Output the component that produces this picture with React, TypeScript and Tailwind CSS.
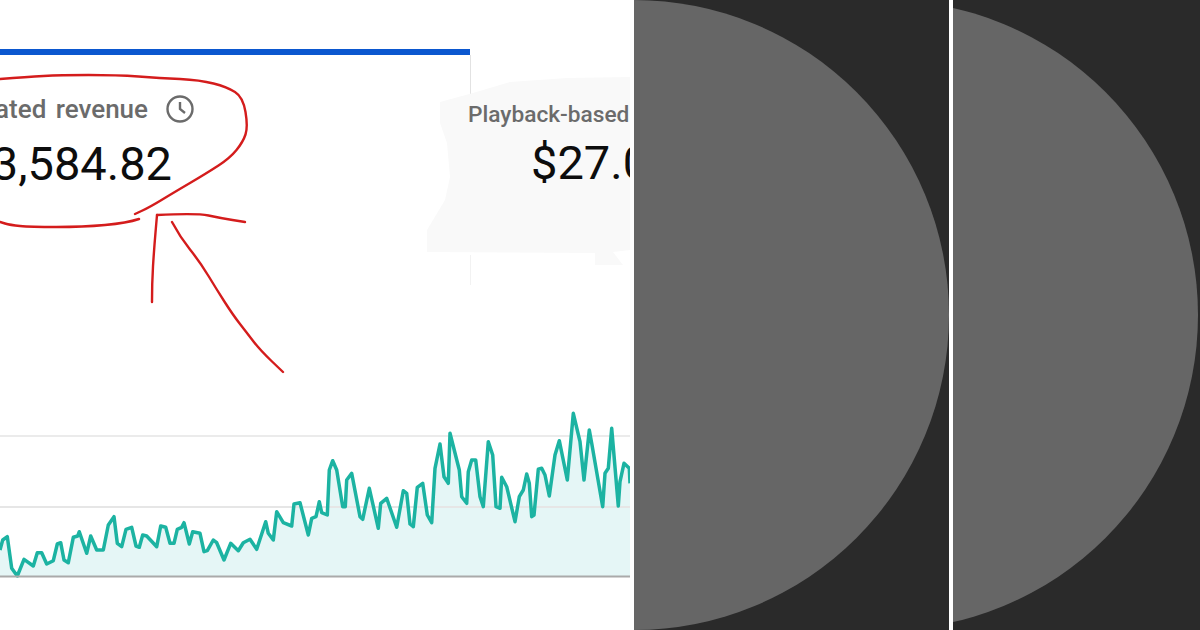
const zoomA = [[0,450],[8,420],[22,410],[35,505],[52,528],[72,478],[100,498],[112,458],[125,458],[140,492],[160,482],[172,432],[182,428],[192,480],[205,488],[220,412],[233,408],[238,395],[260,460],[272,408],[290,450],[310,450],[325,375],[342,350],[352,430],[365,440],[378,388],[395,382],[408,438],[418,442],[428,405],[440,408],[470,440],[482,378],[497,382],[510,430],[522,430],[532,388],[545,382],[552,368],[568,432],[578,395],[600,400],[612,455],[622,452],[640,420],[650,428],[672,480],[692,430],[715,452],[730,428],[750,418],[770,448],[797,365],[805,400],[820,420],[830,335],[850,368],[875,378],[882,312],[900,308],[925,405]];
const zoomB = [[5,355],[18,350],[28,305],[35,338],[52,345],[58,210],[68,182],[80,210],[98,320],[106,320],[110,240],[125,220],[150,350],[158,358],[178,265],[205,385],[212,310],[230,295],[260,382],[280,272],[290,280],[300,372],[310,380],[322,262],[338,250],[352,345],[365,368],[375,205],[390,132],[402,230],[415,250],[420,100],[448,210],[455,290],[470,310],[475,215],[485,180],[497,180],[510,290],[520,320],[535,125],[548,165],[558,320],[570,325],[575,232],[590,260],[615,365],[628,290],[640,270],[650,222],[658,250],[665,350],[672,345],[685,208],[695,205],[705,225],[718,288],[735,165],[748,122],[772,240],[790,40],[810,125],[822,240],[838,90],[845,130],[878,320],[885,220],[895,205],[905,85],[925,318],[930,245],[942,190],[958,205],[960,250]];

const line = [
  ...zoomA.map(([x, y]) => [x / 3, y / 3]),
  ...zoomB.map(([x, y]) => [x / 3 + 310, y / 3]),
].map(([x, y]) => `${x.toFixed(1)},${y.toFixed(1)}`).join(" ");

// hand-drawn strokes: run a quadratic through the midpoints so they stay round
const smooth = (pts: number[][]) => {
  let d = `M${pts[0][0]} ${pts[0][1]}`;
  for (let i = 1; i < pts.length - 1; i++) {
    const mx = (pts[i][0] + pts[i + 1][0]) / 2;
    const my = (pts[i][1] + pts[i + 1][1]) / 2;
    d += ` Q${pts[i][0]} ${pts[i][1]} ${mx} ${my}`;
  }
  const last = pts[pts.length - 1];
  return `${d} L${last[0]} ${last[1]}`;
};

const strokes = [
  [[0,79],[27,77],[60,75],[117,75],[160,78],[200,80],[227,87],[243,97],[248,127],[243,142],[230,158],[207,173],[173,193],[150,207],[135,214]],
  [[139,219],[127,223],[83,227],[30,227],[10,225],[0,222]],
  [[152,302],[152,283],[154,250],[157,215]],
  [[157,215],[197,213],[220,218],[245,222]],
  [[172,222],[180,237],[200,262],[217,290],[233,315],[247,333],[260,350],[283,372]],
];

function RevenueChart() {
  return (
    <svg viewBox="0 0 630 200" className="block h-[200px] w-[630px]">
      <line x1="0" y1="36" x2="630" y2="36" stroke="#ebebeb" strokeWidth="2" />
      <polygon points={`0,176 ${line} 630,176`} fill="#e5f6f6" />
      <line x1="0" y1="107" x2="630" y2="107" stroke="#e6e6e6" strokeWidth="2" />
      <polyline points={line} fill="none" stroke="#1cb3a2" strokeWidth="3.5" strokeLinejoin="round" />
      <line x1="0" y1="176.5" x2="630" y2="176.5" stroke="#aaaaaa" strokeWidth="2" />
    </svg>
  );
}

function Scribble() {
  return (
    <svg viewBox="0 0 630 630" className="absolute left-0 top-0 h-[630px] w-[630px]" fill="none" stroke="#d41c1c" strokeWidth="2.4" strokeLinecap="round" strokeLinejoin="round">
      {strokes.map((pts, i) => (
        <path key={i} d={smooth(pts)} />
      ))}
    </svg>
  );
}

export default function App() {
  return (
    <div className="flex h-[630px] w-[1200px] overflow-hidden bg-white font-['Roboto',sans-serif]">
      <div className="relative mr-1 h-[630px] w-[630px] shrink-0 overflow-hidden bg-white">
        <svg viewBox="0 0 630 630" className="absolute left-0 top-0 h-[630px] w-[630px]">
          <line x1="470.5" y1="55" x2="470.5" y2="96" stroke="#e2e2e2" />
          <line x1="470.5" y1="255" x2="470.5" y2="285" stroke="#f2f2f2" />
          <polygon points="440,102 473,93 510,82 567,78 630,77 630,250 613,252 623,265 595,265 595,253 427,252 427,230 445,200 450,177 447,143 440,123" fill="#f9f9f9" />
        </svg>
        <div className="relative mt-[49px] h-[6px] w-[470px] bg-[#0b57cf]" />
        <div className="relative flex h-[345px] pt-10">
          <div className="flex w-[172px] shrink-0 flex-col items-end">
            <div className="mr-[-22px] flex h-7 items-center gap-[18px] whitespace-nowrap text-[26px] font-medium text-[#6b6b6b] [word-spacing:3px]">
              <span>Estimated revenue</span>
              <svg viewBox="0 0 28 28" className="h-7 w-7 shrink-0" fill="none" stroke="#6b6b6b" strokeWidth="2.4">
                <circle cx="14" cy="14" r="12.5" />
                <path d="M14 7 V14 L19 18" />
              </svg>
            </div>
            <div className="mt-[13px] whitespace-nowrap text-[47px] leading-[56px] text-[#0d0d0d]">$3,584.82</div>
          </div>
          <div className="ml-[296px] flex shrink-0 flex-col items-start">
            <div className="mt-[6px] flex h-7 items-center whitespace-nowrap text-[22.7px] font-medium text-[#6b6b6b]">Playback-based CPM</div>
            <div className="ml-[63px] mt-[6px] whitespace-nowrap text-[47px] leading-[56px] text-[#0d0d0d]">$27.04</div>
          </div>
        </div>
        <div className="relative">
          <RevenueChart />
        </div>
        <Scribble />
      </div>
      <div className="h-[630px] w-[315px] shrink-0 bg-[#2a2a2a]">
        <div className="h-full w-full rounded-r-[315px] bg-[#666666]" />
      </div>
      <div className="ml-1 h-[630px] flex-1 overflow-hidden bg-[#2a2a2a]">
        <div className="ml-[-385px] h-[630px] w-[630px] rounded-full bg-[#666666]" />
      </div>
    </div>
  );
}
